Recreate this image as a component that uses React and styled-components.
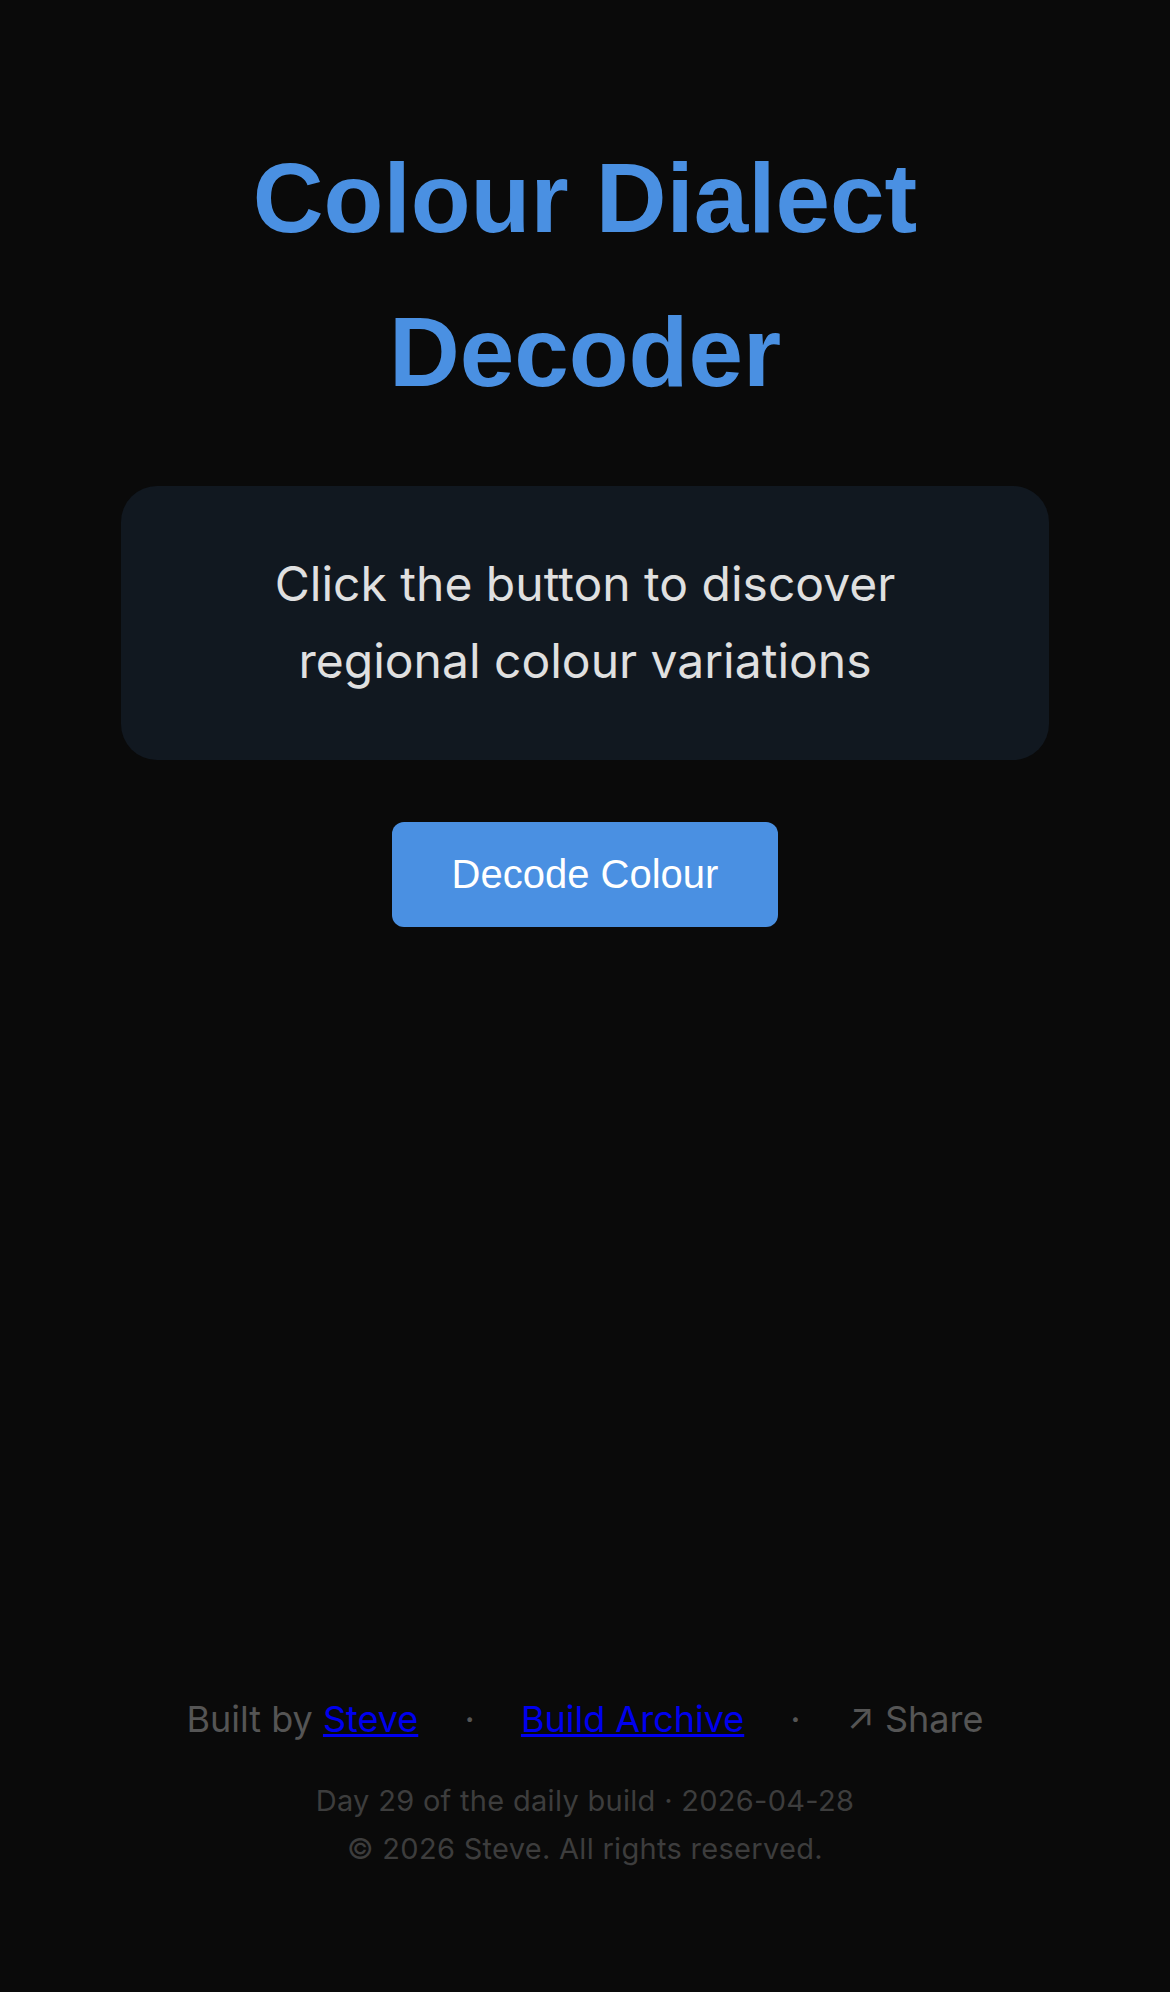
import * as React from "react"
import { useState } from "react"
import styled, { createGlobalStyle } from "styled-components"

// **** Global ****
const GlobalStyle = createGlobalStyle`
  html,
  body {
    margin: 0;
    padding: 0;
    background-color: #0a0a0a;
  }

  body {
    font-family: Inter, "Noto Sans", sans-serif;
    line-height: 1.6;
    color: #e0e0e0;
  }

  * {
    box-sizing: border-box;
  }
`

// **** Styled Components ****
const Page = styled.div`
  min-height: 100vh;
  display: flex;
  flex-direction: column;
  padding: 122px 121px 0;
`

const Main = styled.main`
  flex: 1;
  display: flex;
  flex-direction: column;
  align-items: center;
`

const Title = styled.h1`
  margin: 0 0 57px;
  font-family: "Liberation Sans", Arial, sans-serif;
  font-weight: 700;
  font-size: 98px;
  line-height: 153.6px;
  text-align: center;
  color: #4a90e2;
`

const Card = styled.div`
  align-self: stretch;
  padding: 60px;
  border-radius: 36px;
  background-color: #111820;
  text-align: center;

  p {
    margin: 0;
    font-size: 48px;
    color: #e0e0e0;
  }
`

const DecodeButton = styled.button`
  margin-top: 62px;
  padding: 30px 60px;
  border: none;
  border-radius: 12px;
  background-color: #4a90e2;
  color: #ffffff;
  font-family: "Liberation Sans", Arial, sans-serif;
  font-size: 40px;
  cursor: pointer;
  transition: background-color 0.2s ease-out;

  :hover {
    background-color: #3f82d1;
  }
`

const Footer = styled.footer`
  padding-bottom: 119px;
  text-align: center;
`

const FooterLinks = styled.p`
  margin: 0 0 28px;
  font-size: 36px;
  color: #555555;

  a {
    color: #0000ee;
  }
`

const Sep = styled.span`
  margin: 0 36px;
`

const Meta = styled.p`
  margin: 0;
  font-size: 29px;
  line-height: 48px;
  letter-spacing: 0.3px;
  color: #3d3d3d;
`

const dialects = [
  "In Glasgow, that teal is just 'blue'",
  "In Texas, that lilac is 'light purple, y'all'",
  "In Sydney, that maroon is 'footy red'",
  "In Dublin, that olive is 'a grand green'"
]

const App = () => {
  const [result, setResult] = useState(null)

  const handleClick = () => {
    const next = dialects[Math.floor(Math.random() * dialects.length)]
    setResult(next)
  }

  return (
    <>
      <GlobalStyle />
      <Page>
        <Main>
          <Title>Colour Dialect Decoder</Title>
          <Card>
            <p>
              {result ||
                "Click the button to discover regional colour variations"}
            </p>
          </Card>
          <DecodeButton onClick={handleClick}>Decode Colour</DecodeButton>
        </Main>

        <Footer>
          <FooterLinks>
            Built by <a href="#">Steve</a> <Sep>·</Sep>{" "}
            <a href="#">Build Archive</a> <Sep>·</Sep> ↗ Share
          </FooterLinks>
          <Meta>Day 29 of the daily build · 2026-04-28</Meta>
          <Meta>© 2026 Steve. All rights reserved.</Meta>
        </Footer>
      </Page>
    </>
  )
}

export default App
